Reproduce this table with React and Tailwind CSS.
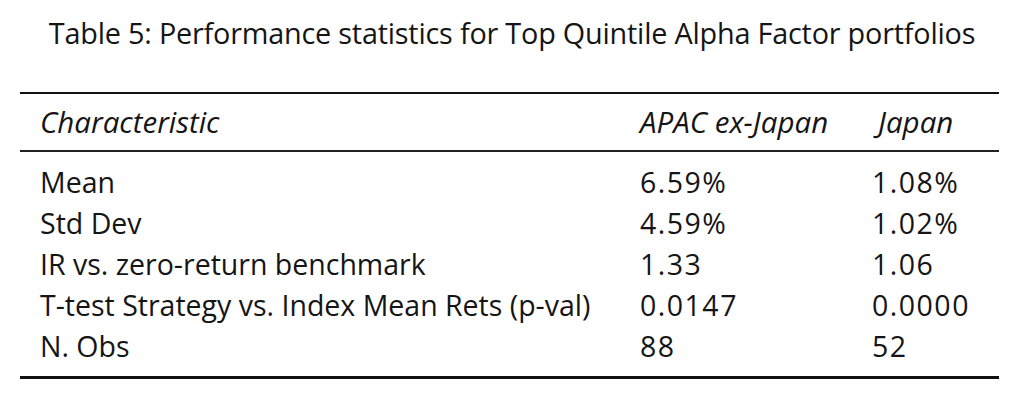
import React from 'react';

const rows = [
    ['Mean', '6.59%', '1.08%'],
    ['Std Dev', '4.59%', '1.02%'],
    ['IR vs. zero-return benchmark', '1.33', '1.06'],
    ['T-test Strategy vs. Index Mean Rets (p-val)', '0.0147', '0.0000'],
    ['N. Obs', '88', '52'],
];

const App = () => {
    return (
        <div className="w-[1024px] h-[416px] bg-white text-[#151515] font-['Open_Sans',sans-serif] overflow-hidden">
            {/* Caption */}
            <div className="pt-[13px] text-center text-[28.8px] leading-[40px] tracking-[-0.2px] whitespace-nowrap">
                Table 5: Performance statistics for Top Quintile Alpha Factor portfolios
            </div>

            {/* Table */}
            <div className="mt-[39px] ml-[20px] w-[979px] border-t-[2px] border-b-[3px] border-[#111]">
                <div className="flex h-[58px] items-center italic text-[29.5px] border-b-[2px] border-[#222]">
                    <div className="w-[620px] pl-[20px]">Characteristic</div>
                    <div className="w-[238px]">APAC ex-Japan</div>
                    <div className="flex-1">Japan</div>
                </div>
                <div className="pt-[10px] pb-[9px] text-[28.5px]">
                    {rows.map(([label, apac, japan]) => (
                        <div key={label} className="flex h-[41px] items-center">
                            <div className="w-[620px] pl-[20px] whitespace-nowrap">{label}</div>
                            <div className="w-[232px] tracking-[1.5px]">{apac}</div>
                            <div className="flex-1 tracking-[1.5px]">{japan}</div>
                        </div>
                    ))}
                </div>
            </div>
        </div>
    );
};

export default App;
